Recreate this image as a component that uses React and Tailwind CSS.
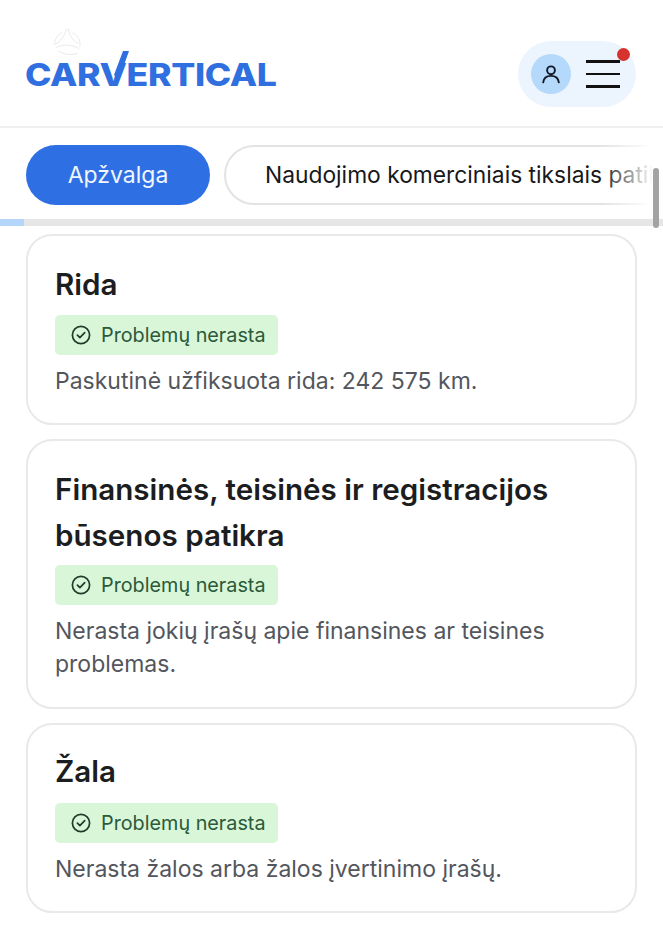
import React from "react";

const font = { fontFamily: "Inter, 'Liberation Sans', sans-serif" };

function Badge() {
  return (
    <div className="inline-flex h-10 w-[223px] items-center gap-[10px] rounded-[5px] bg-[#d9f6d8] pl-[16px] text-[19.8px] text-[#2a5a3a]">
      <svg width="20" height="20" viewBox="0 0 20 20" fill="none" stroke="#1f3d2b" strokeWidth="1.7" strokeLinecap="round" strokeLinejoin="round" className="shrink-0">
        <circle cx="10" cy="10" r="8.6" />
        <path d="M6.4 10.2l2.5 2.5 4.8-5" />
      </svg>
      <span className="whitespace-nowrap pt-[1px]">Problemų nerasta</span>
    </div>
  );
}

function Card({ title, text, className, badgeClass }) {
  return (
    <section className={`rounded-[26px] border-2 border-[#e9e9e9] bg-white px-[27px] ${className}`}>
      <h2 className="text-[29.6px] font-semibold leading-[46px] text-[#1c1d20]">{title}</h2>
      <div className={`flex ${badgeClass}`}><Badge /></div>
      <p className="mt-[10px] text-[23px] leading-[33px] text-[#53565c]">{text}</p>
    </section>
  );
}

export default function App() {
  return (
    <div style={font} className="relative h-[931px] w-[663px] overflow-hidden bg-white">
      <header className="flex h-[128px] items-start justify-between border-b-2 border-[#efefef] pl-[26px] pr-[27px]">
        <div className="relative mt-[28px] h-[60px] w-[250px]">
          <svg width="36" height="30" viewBox="0 0 36 38" fill="none" stroke="#e2e2e2" strokeWidth="1" className="absolute left-[24px] top-[0px]">
            <path d="M16 1c-2 8-7 15-14 20M18 1c2 8 6 15 13 19" />
            <path d="M10 6C3 10 1 16 1 21M24 6c8 4 10 12 9 18" />
            <path d="M3 25c8-5 20-4 29 1M6 29c7 5 16 6 24 3" />
          </svg>
          <div className="absolute left-[-1px] top-[31px] origin-left scale-x-[1.148] whitespace-nowrap text-[31px] font-extrabold leading-[32px] tracking-[-0.3px] text-[#2f6fdf]">
            CARVERTICAL
          </div>
          <svg width="16" height="30" viewBox="0 0 16 30" className="absolute left-[88px] top-[23px]">
            <polygon points="9,0 15,0 5,28 0,24" fill="#2f6fdf" />
          </svg>
        </div>
        <div className="relative mt-[41px] flex h-[66px] w-[118px] items-center rounded-[33px] bg-[#ecf5fe] pl-[13px]">
          <div className="flex h-10 w-10 items-center justify-center rounded-full bg-[#b4d9fb]">
            <svg width="20" height="20" viewBox="0 0 20 20" fill="none" stroke="#111827" strokeWidth="1.9" strokeLinecap="round">
              <circle cx="10" cy="6.3" r="3.9" />
              <path d="M2.2 18.4c.5-4.4 3.5-6.5 7.8-6.5s7.3 2.1 7.8 6.5" />
            </svg>
          </div>
          <div className="ml-[15px] flex w-[34px] flex-col gap-[10px]">
            <span className="h-[2.5px] bg-[#111]" />
            <span className="h-[2.5px] bg-[#111]" />
            <span className="h-[2.5px] bg-[#111]" />
          </div>
          <span className="absolute left-[99px] top-[7px] h-[13px] w-[13px] rounded-full bg-[#d6332f]" />
        </div>
      </header>

      <nav className="relative mt-[17px] flex gap-[14px] overflow-hidden pl-[26px]">
        <div className="flex h-[60px] w-[184px] shrink-0 items-center justify-center rounded-[30px] bg-[#2f6fe4] text-[23px] text-[#f1f6ff]">Apžvalga</div>
        <div className="flex h-[60px] w-[600px] shrink-0 items-center whitespace-nowrap rounded-[30px] border-2 border-[#e3e3e3] pl-[39px] text-[22.8px] text-[#17181a]">
          Naudojimo komerciniais tikslais patikra
        </div>
        <div className="absolute right-[10px] top-0 h-[60px] w-[52px] bg-gradient-to-r from-transparent to-white" />
        <div className="absolute right-0 top-0 h-[60px] w-[10px] bg-white" />
      </nav>

      <div className="mt-[14px] h-[7px] bg-[#e6e6e6]">
        <div className="h-full w-[24px] bg-[#b4d6fa]" />
      </div>
      <div className="absolute left-[653px] top-[168px] h-[60px] w-[6px] rounded-full bg-[#a3a3a3]" />

      <main className="mt-[8px] flex flex-col gap-[14px] pl-[26px] pr-[26px]">
        <Card className="h-[191px] pt-[25px]" badgeClass="mt-[8px]" title="Rida" text="Paskutinė užfiksuota rida: 242 575 km." />
        <Card className="h-[270px] pt-[25px]" badgeClass="mt-[7px]" title="Finansinės, teisinės ir registracijos būsenos patikra" text="Nerasta jokių įrašų apie finansines ar teisines problemas." />
        <Card className="h-[190px] pt-[23px]" badgeClass="mt-[9px]" title="Žala" text="Nerasta žalos arba žalos įvertinimo įrašų." />
      </main>
    </div>
  );
}
